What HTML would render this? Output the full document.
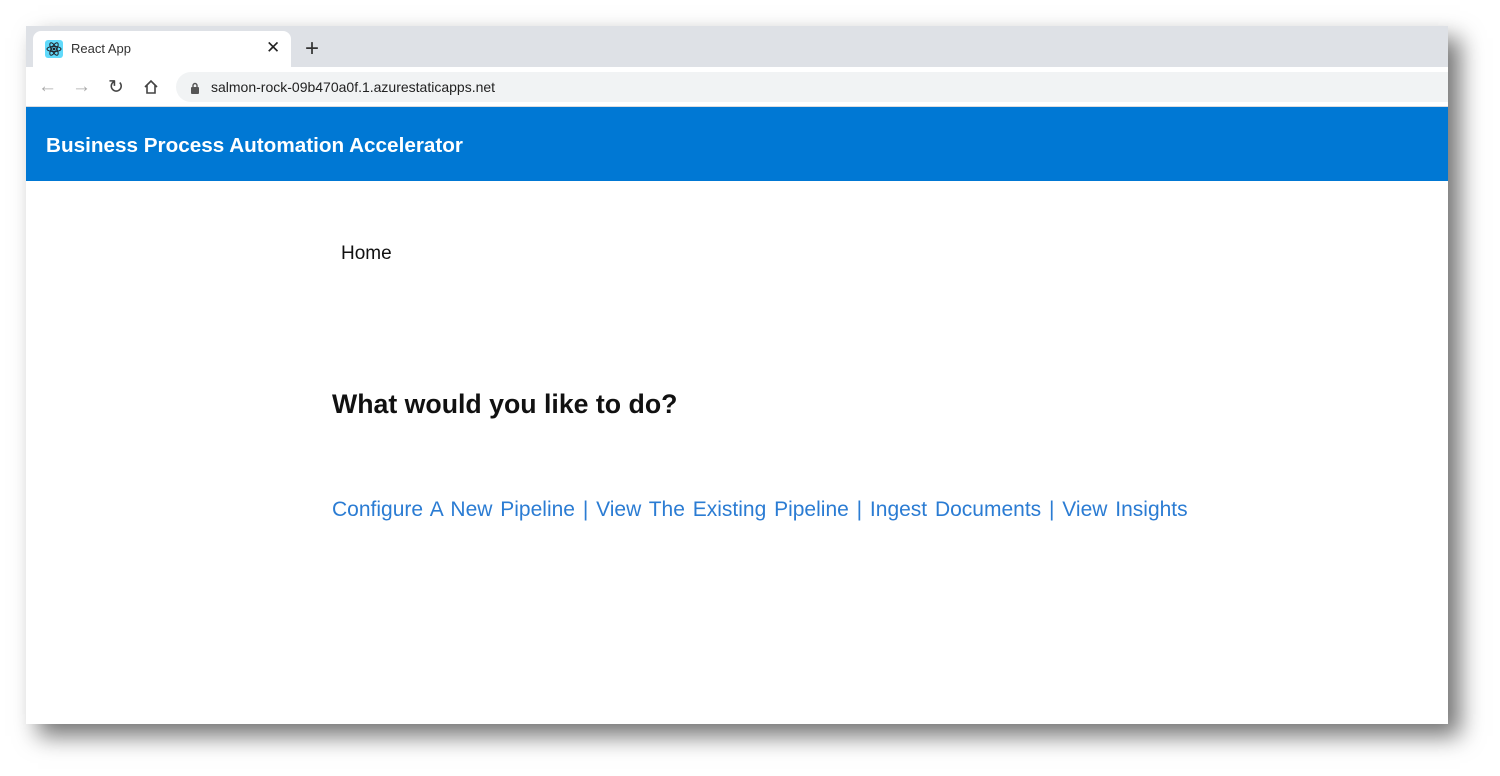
<!DOCTYPE html>
<html><head><style>
body{margin:0;width:1500px;height:776px;background:#fff;position:relative;overflow:hidden;font-family:"Segoe UI","Liberation Sans",sans-serif}
#win{position:absolute;left:26px;top:26px;width:1422px;height:698px;background:#fff;box-shadow:12px 12px 22px rgba(0,0,0,.55)}
#tabs{position:absolute;left:0;top:0;width:100%;height:41px;background:#dee1e6}
#tab{position:absolute;left:7px;top:5px;width:258px;height:36px;background:#fff;border-radius:8px 8px 0 0}
#addr{position:absolute;left:0;top:41px;width:100%;height:39px;background:#fff;border-bottom:1px solid #dadce0}
#omni{position:absolute;left:150px;top:5px;right:0;height:30px;background:#f1f3f4;border-radius:15px 0 0 15px}
#hdr{position:absolute;left:0;top:81px;width:100%;height:74px;background:#0078d4;color:#fff;font-weight:bold;font-size:20.7px;line-height:78px;padding-left:20px;box-sizing:border-box}
.t{position:absolute;white-space:nowrap}
</style></head><body>
<div id="win">
<div id="tabs"><div id="tab">
<svg class="t" style="left:12px;top:9px" width="18" height="18" viewBox="0 0 18 18"><rect width="18" height="18" rx="3" fill="#61dafb"/><g fill="none" stroke="#20232a" stroke-width="1"><ellipse cx="9" cy="9" rx="7" ry="2.6"/><ellipse cx="9" cy="9" rx="7" ry="2.6" transform="rotate(60 9 9)"/><ellipse cx="9" cy="9" rx="7" ry="2.6" transform="rotate(120 9 9)"/></g><circle cx="9" cy="9" r="1.4" fill="#20232a"/></svg>
<div class="t" style="left:38px;top:10px;font-size:13px;color:#333">React App</div>
<div class="t" style="left:233px;top:7px;font-size:17px;color:#222">✕</div>
</div>
<div class="t" style="left:279px;top:9px;font-size:24px;color:#333;line-height:28px">+</div>
</div>
<div id="addr">
<div class="t" style="left:12px;top:9px;font-size:19px;color:#aaa">←</div>
<div class="t" style="left:46px;top:9px;font-size:19px;color:#aaa">→</div>
<div class="t" style="left:82px;top:9px;font-size:19px;color:#444">↻</div>
<svg class="t" style="left:117px;top:12px" width="16" height="16" viewBox="0 0 16 16"><path d="M2 8 L8 2 L14 8 M4 6.5 V14 H12 V6.5" fill="none" stroke="#444" stroke-width="1.6"/></svg>
<div id="omni">
<svg class="t" style="left:14px;top:10px" width="10" height="12" viewBox="0 0 10 12"><rect x="1" y="5" width="8" height="7" rx="1" fill="#555"/><path d="M3 5V3.5a2 2 0 0 1 4 0V5" fill="none" stroke="#555" stroke-width="1.4"/></svg>
<div class="t" style="left:35px;top:7px;font-size:14px;color:#222">salmon-rock-09b470a0f.1.azurestaticapps.net</div>
</div></div>
<div id="hdr">Business Process Automation Accelerator</div>
<div class="t" style="left:315px;top:217px;font-size:19px;color:#111">Home</div>
<div class="t" style="left:306px;top:363px;font-size:26.7px;font-weight:bold;color:#111">What would you like to do?</div>
<div class="t" style="left:306px;top:472px;font-size:21px;color:#2b7cd3;word-spacing:2px">Configure A New Pipeline | View The Existing Pipeline | Ingest Documents | View Insights</div>
</div>
</body></html>
